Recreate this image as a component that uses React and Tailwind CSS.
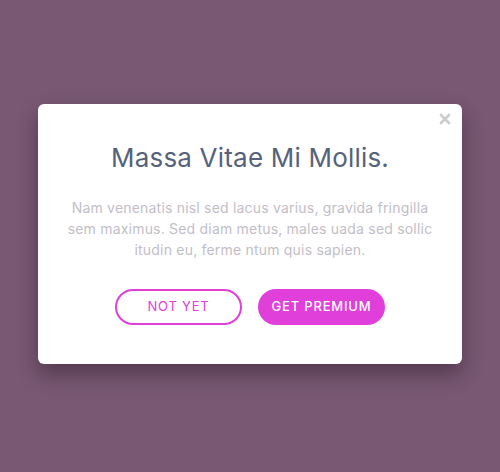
import { X } from 'lucide-react';

export default function App() {
  return (
    <div
      className="w-[500px] h-[472px] bg-[#785872] flex items-center justify-center pb-[4px]"
      style={{ fontFamily: 'Inter, "Noto Sans", sans-serif' }}
    >
      <div className="relative w-[424px] bg-white rounded-md shadow-[0_10px_20px_rgba(40,20,40,0.45)] px-[20px] pt-[36px] pb-[39px] flex flex-col items-center">
        <button className="absolute top-[7px] right-[9px] text-[#cccccc]">
          <X className="w-[16px] h-[16px]" strokeWidth={4} />
        </button>
        <h2 className="text-[26px] leading-[36px] text-[#56627c] tracking-[0.2px]">
          Massa Vitae Mi Mollis.
        </h2>
        <p className="mt-[21px] text-[14px] leading-[21px] text-[#c2bec7] text-center tracking-[0.2px] whitespace-nowrap">
          Nam venenatis nisl sed lacus varius, gravida fringilla
          <br />
          sem maximus. Sed diam metus, males uada sed sollic
          <br />
          itudin eu, ferme ntum quis sapien.
        </p>
        <div className="mt-[29px] flex gap-[16px]">
          <button className="w-[127px] h-[36px] rounded-full border-2 border-[#e040d9] text-[#e040d9] text-[13px] tracking-[0.8px]">
            NOT YET
          </button>
          <button className="w-[127px] h-[36px] rounded-full bg-[#e040d9] text-white text-[13px] font-medium tracking-[0.8px]">
            GET PREMIUM
          </button>
        </div>
      </div>
    </div>
  );
}
